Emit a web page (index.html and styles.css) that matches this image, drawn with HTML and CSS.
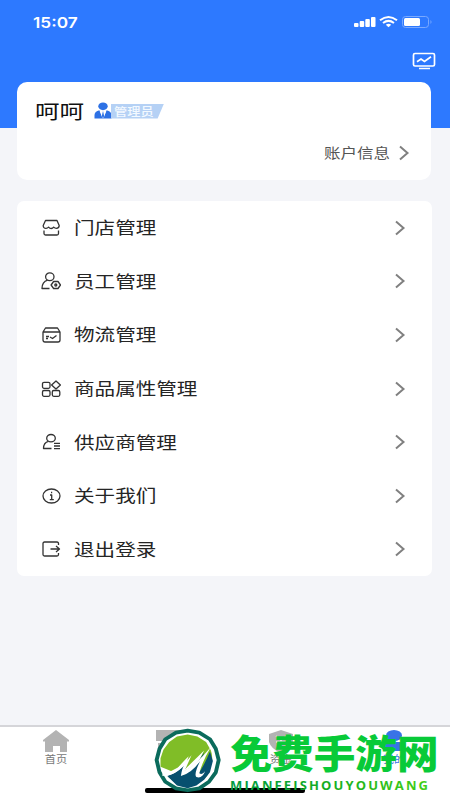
FILE: index.html
```html
<!DOCTYPE html>
<html lang="zh-CN">
<head>
<meta charset="utf-8">
<title>我的</title>
<link rel="stylesheet" href="styles.css">
</head>
<body>
<div class="screen">
  <header class="hero">
    <div class="status">
      <span class="clock">15:07</span>
      <svg class="signals" width="80" height="16" viewBox="0 0 80 16">
        <g fill="#fff"><rect x="1" y="9" width="4.500" height="4" rx="1"/><rect x="6.700" y="7" width="4.500" height="6" rx="1"/><rect x="12.300" y="5" width="4.500" height="8" rx="1"/><rect x="18" y="3" width="4.500" height="10" rx="1"/></g>
        <g fill="none" stroke="#fff" stroke-width="2"><path d="M27 6.300Q35.500-.4 44 6.300M30 9Q35.500 4.800 41 9"/></g>
        <path d="M32.800 10.800Q35.500 8.600 38.200 10.800L35.500 13.300Z" fill="#fff"/>
        <rect x="49.500" y="2.500" width="26" height="11" rx="3" fill="none" stroke="#79a9ff"/>
        <rect x="51" y="4" width="16" height="8" rx="1.500" fill="#fff"/>
        <path d="M77.500 6v4q2-2 0-4" fill="#79a9ff"/>
      </svg>
    </div>
    <svg class="monitor" width="24" height="18" viewBox="0 0 24 18" fill="none" stroke="#fff" stroke-width="1.700"><rect x="1.500" y="1.500" width="21" height="12.500" rx="1.500"/><path d="M5 9.800 9 7l3.500 2.500L19 4.800M7 16.500h11"/></svg>
  </header>
  <section class="card profile">
    <div class="user">
      <span class="name">呵呵</span>
      <svg class="role-icon" width="18" height="17" viewBox="0 0 18 17" fill="#2d71e5"><ellipse cx="9" cy="4.300" rx="4.700" ry="3.900"/><path d="M.5 16.500V13Q.5 9.500 5.500 8.200L8 15l1-5 1 5 2.500-6.800Q17.500 9.500 17.500 13v3.500h-5V13v3.500h-7V13v3.500Z"/><path d="M5.500 8.500 9 16.500l3.500-8-2.500 1H8Z" fill="#fff"/><path d="m9 9 1.200 5L9 16l-1.200-2Z"/></svg>
      <span class="role"><span>管理员</span></span>
    </div>
    <div class="account"><span class="account-label">账户信息</span><svg class="chev" width="12" height="16" viewBox="0 0 12 16"><path d="m2 1.500 7.500 6.500L2 14.500"/></svg></div>
  </section>
  <nav class="card menu">
    <div class="row"><svg class="ico" viewBox="0 0 20 18"><path d="M4.500 1.500h11.500l2.200 5q0 2.800-2.800 2.800-1.600 0-2.700-1.200Q11.600 9.500 10.200 9.500T7.600 8.100Q6.500 9.300 5 9.300 2.200 9.300 2.200 6.500ZM3 11.500V14.500q0 1.500 1.500 1.500h11.500q1.500 0 1.500-1.500v-3"/></svg><span class="label">门店管理</span><svg class="chev" width="12" height="16" viewBox="0 0 12 16"><path d="m2 1.500 7.500 6.500L2 14.500"/></svg></div>
    <div class="row"><svg class="ico" viewBox="0 0 20 18"><ellipse cx="8.800" cy="4.700" rx="4.200" ry="3.900"/><path d="M6.600 8.200Q1 10 1 16.500H8.500M12.600 9.500h4.400l2.500 3.500-2.500 3.500h-4.400L10.100 13Z"/><circle cx="14.800" cy="13" r="1"/></svg><span class="label">员工管理</span><svg class="chev" width="12" height="16" viewBox="0 0 12 16"><path d="m2 1.500 7.500 6.500L2 14.500"/></svg></div>
    <div class="row"><svg class="ico" viewBox="0 0 20 18"><path d="M2 6 4.500 2h12L19 6v8q0 2-2 2H4q-2 0-2-2ZM2 6h17M5 10.500h3M5 12.500h2M9 11l2.500 1.500L15.500 9.500"/></svg><span class="label">物流管理</span><svg class="chev" width="12" height="16" viewBox="0 0 12 16"><path d="m2 1.500 7.500 6.500L2 14.500"/></svg></div>
    <div class="row"><svg class="ico" viewBox="0 0 20 18"><rect x="1.500" y="2.300" width="7.500" height="6" rx="1.500"/><rect x="1.500" y="10.500" width="7.500" height="5.800" rx="1.500"/><rect x="11.300" y="10.500" width="7.500" height="5.800" rx="1.500"/><path d="m15 1 4.400 4-4.400 4-4.400-4Z"/></svg><span class="label">商品属性管理</span><svg class="chev" width="12" height="16" viewBox="0 0 12 16"><path d="m2 1.500 7.500 6.500L2 14.500"/></svg></div>
    <div class="row"><svg class="ico" viewBox="0 0 20 18"><ellipse cx="10" cy="5.200" rx="4.300" ry="3.700"/><path d="M7.500 8.300Q2.500 9.500 2.500 15.500h8M13 10.300h6M13 13h6M13 15.700h6"/></svg><span class="label">供应商管理</span><svg class="chev" width="12" height="16" viewBox="0 0 12 16"><path d="m2 1.500 7.500 6.500L2 14.500"/></svg></div>
    <div class="row"><svg class="ico" viewBox="0 0 20 18"><ellipse cx="10.500" cy="9" rx="8.500" ry="7"/><path d="M9 8h1.700v4.700M8.800 12.700h4"/><path d="M10 5.500h1.200" stroke-width="1.500"/></svg><span class="label">关于我们</span><svg class="chev" width="12" height="16" viewBox="0 0 12 16"><path d="m2 1.500 7.500 6.500L2 14.500"/></svg></div>
    <div class="row"><svg class="ico" viewBox="0 0 20 18"><path d="M17.500 5V3.500Q17.500 2 16 2H3.500Q2 2 2 3.500v11Q2 16 3.500 16H16q1.500 0 1.500-1.500V13M9.500 9H18.500M15 6l3.500 3-3.500 3"/></svg><span class="label">退出登录</span><svg class="chev" width="12" height="16" viewBox="0 0 12 16"><path d="m2 1.500 7.500 6.500L2 14.500"/></svg></div>
  </nav>
  <footer class="tabs">
    <div class="tab"><svg width="28" height="24" viewBox="0 0 28 24"><path d="M14 1 27 11v1.500h-2V23h-7v-6h-7v6H3V12.500H1V11Z"/></svg><span>首页</span></div>
    <div class="tab"><svg width="28" height="24" viewBox="0 0 28 24"><path d="M1 1h26v11H1ZM3 14h22v9H3Z"/></svg><span>商品</span></div>
    <div class="tab"><svg width="28" height="24" viewBox="0 0 28 24"><path d="m14 1 12 4v8q-2 7-12 11Q4 20 2 13V5Z"/><path d="m9 7 5 4 5-4M9 13h10M14 10v8" fill="none" stroke="#eee" stroke-width="1.500"/></svg><span>资金</span></div>
    <div class="tab active"><svg width="28" height="24" viewBox="0 0 28 24"><ellipse cx="14" cy="6.500" rx="8" ry="5.500"/><path d="M2 18q0-5 7-5h10q7 0 7 5 0 4-4 4H6q-4 0-4-4"/></svg><span>我的</span></div>
  </footer>
  <div class="home-bar"></div>
  <div class="watermark">
    <svg width="300" height="75" viewBox="0 0 300 75">
      <defs><linearGradient id="latin" x1="0" x2="1"><stop stop-color="#009b42"/><stop offset=".5" stop-color="#15ad22"/><stop offset="1" stop-color="#40cf19"/></linearGradient></defs>
      <g transform="matrix(.97 0 0 .945 .8 1)">
      <path d="M38 5 50 7 61 14 67 24 70 36 67 49 60 59 50 66 38 68 26 66 15 59 9 49 6 36 9 24 15 14 26 7Z" fill="#fff" stroke="#0b6b5c" stroke-width="4" stroke-linejoin="round"/>
      <path d="m38 9 10 2 9 6 5 9q2 6 1 12L58 53 49 60 38 64 27 61 18 54Q43 48 59 26L48 40l7-14-21 21 5-15Q31 40 24 49L10 43V34l3-9 6-8 8-6Z" fill="#80bd27"/>
      <path d="M17 53Q29 49 38 38l-5 14q10-4 22-24l-6 22q5-6 12-23l3 10-3 12-6 8-8 6-9 3-11-3Z" fill="#07506f"/>
      <path d="M12 47q4 4 10 0Q34 42 42 31l-7 16Q47 41 62 22 53 38 50 50q3 2 6-2-3 8-9 6-3-3 4-17-9 13-20 16 1-8 4-13-9 13-23 13Z" fill="#fff"/>
      </g>
      <text class="wm-cn" x="80.500" y="42.500" textLength="208" lengthAdjust="spacingAndGlyphs">免费手游网</text>
      <text class="wm-en" x="80" y="65" textLength="198" fill="url(#latin)">MIANFEISHOUYOUWANG</text>
    </svg>
  </div>
</div>
</body>
</html>
```
FILE: styles.css
```css
* { box-sizing: border-box; }
body { margin: 0; font-family: "Noto Sans CJK SC", sans-serif; }
.screen { position: relative; display: flex; flex-direction: column; width: 450px; height: 800px; background: #f4f5f9; overflow: hidden; }
.hero { height: 128px; flex: none; background: #2d79ff; padding: 14px 14px 0 33px; display: flex; flex-direction: column; }
.status { display: flex; justify-content: space-between; height: 38px; padding-right: 3px; }
.clock { font: 600 15px/17px Inter, sans-serif; color: #fff; transform: scaleX(1.15); transform-origin: left; height: 17px; }
.monitor { align-self: flex-end; }
.card { background: #fff; border-radius: 10px; }
.profile { margin: -46px 19px 0 17px; height: 98px; flex: none; padding: 14px 21px 0 18px; }
.user { display: flex; align-items: center; height: 29px; }
.name { font-size: 19px; line-height: 29px; color: #111; width: 59px; transform: scaleX(1.29); transform-origin: left; font-weight: 400; }
.role-icon { flex: none; }
.role { background: #b5d1f5; height: 15px; width: 53px; margin: 1px 0 0 -1px; padding-left: 3px; clip-path: polygon(0 0, 100% 0, 88% 100%, 0 100%); color: #f3f9ff; font-size: 11px; line-height: 15px; font-weight: 500; }
.role span { display: inline-block; transform: scaleX(1.2); transform-origin: left; }
.account { display: flex; justify-content: flex-end; align-items: center; height: 24px; margin-top: 16px; }
.account-label { font-size: 14px; line-height: 24px; color: #555; transform: translateY(-1px) scaleX(1.18); transform-origin: right; margin-right: 8px; }
.chev { flex: none; fill: none; stroke: #808080; stroke-width: 2; }
.menu { margin: 21px 18px 0 17px; height: 375px; flex: none; border-radius: 7px; }
.row { display: flex; align-items: center; height: 53.600px; padding: 0 26px 0 24px; }
.ico { width: 20px; height: 18px; flex: none; fill: none; stroke: #333; stroke-width: 1.300; stroke-linejoin: round; }
.label { font-size: 17px; line-height: 26px; color: #252525; margin: -1px auto 0 13px; transform: scaleX(1.21); transform-origin: left; }
.tabs { display: flex; height: 75px; flex: none; margin-top: auto; background: #fff; border-top: 2px solid #d5d5d9; }
.tab { flex: 1; display: flex; flex-direction: column; align-items: center; padding-top: 2px; color: #777; font-size: 10px; line-height: 13px; }
.tab svg { fill: #b3b3b3; }
.tab span { transform: scaleX(1.12); margin-top: -1px; }
.active { color: #3973e6; }
.active svg { fill: #3973e6; }
.home-bar { position: absolute; left: 145px; top: 788px; width: 160px; height: 5px; border-radius: 2px; background: #000; }
.watermark { position: absolute; left: 150px; top: 725px; height: 75px; }
.wm-cn { font-family: "Noto Sans CJK SC", sans-serif; font-size: 39px; font-weight: 900; fill: #08ca38; }
.wm-en { font-family: "Open Sans", sans-serif; font-size: 13px; font-weight: 700; }
```
